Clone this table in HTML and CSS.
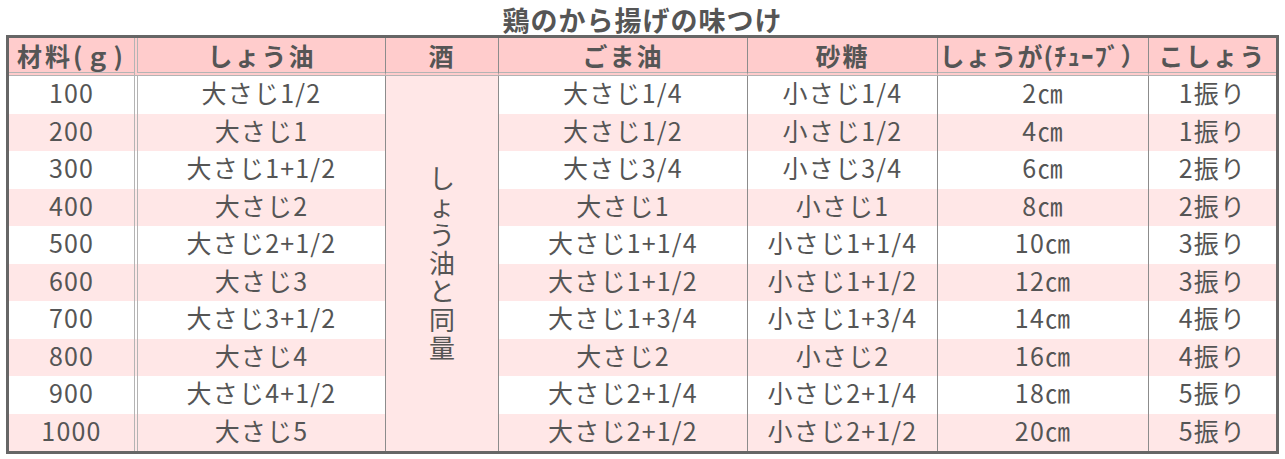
FILE: index.html
```html
<!DOCTYPE html>
<html lang="ja">
<head>
<meta charset="utf-8">
<title>鶏のから揚げの味つけ</title>
<link rel="stylesheet" href="styles.css">
</head>
<body>
<div class="page">
  <h1 class="title">鶏のから揚げの味つけ</h1>
  <table class="recipe">
    <thead>
      <tr>
        <th class="c1 tight">材料(ｇ)</th>
        <th class="c2">しょう油</th>
        <th class="c3">酒</th>
        <th class="c4">ごま油</th>
        <th class="c5">砂糖</th>
        <th class="c6 narrow">しょうが(ﾁｭｰﾌﾞ）</th>
        <th class="c7">こしょう</th>
      </tr>
    </thead>
    <tbody>
      <tr class="odd">
        <td class="c1">100</td><td class="c2">大さじ1/2</td>
        <td class="c3 merged" rowspan="10"><span class="vtext">しょう油と同量</span></td>
        <td class="c4">大さじ1/4</td><td class="c5">小さじ1/4</td><td class="c6">2㎝</td><td class="c7">1振り</td>
      </tr>
      <tr class="even">
        <td class="c1">200</td><td class="c2">大さじ1</td><td class="c4">大さじ1/2</td><td class="c5">小さじ1/2</td><td class="c6">4㎝</td><td class="c7">1振り</td>
      </tr>
      <tr class="odd">
        <td class="c1">300</td><td class="c2">大さじ1+1/2</td><td class="c4">大さじ3/4</td><td class="c5">小さじ3/4</td><td class="c6">6㎝</td><td class="c7">2振り</td>
      </tr>
      <tr class="even">
        <td class="c1">400</td><td class="c2">大さじ2</td><td class="c4">大さじ1</td><td class="c5">小さじ1</td><td class="c6">8㎝</td><td class="c7">2振り</td>
      </tr>
      <tr class="odd">
        <td class="c1">500</td><td class="c2">大さじ2+1/2</td><td class="c4">大さじ1+1/4</td><td class="c5">小さじ1+1/4</td><td class="c6">10㎝</td><td class="c7">3振り</td>
      </tr>
      <tr class="even">
        <td class="c1">600</td><td class="c2">大さじ3</td><td class="c4">大さじ1+1/2</td><td class="c5">小さじ1+1/2</td><td class="c6">12㎝</td><td class="c7">3振り</td>
      </tr>
      <tr class="odd">
        <td class="c1">700</td><td class="c2">大さじ3+1/2</td><td class="c4">大さじ1+3/4</td><td class="c5">小さじ1+3/4</td><td class="c6">14㎝</td><td class="c7">4振り</td>
      </tr>
      <tr class="even">
        <td class="c1">800</td><td class="c2">大さじ4</td><td class="c4">大さじ2</td><td class="c5">小さじ2</td><td class="c6">16㎝</td><td class="c7">4振り</td>
      </tr>
      <tr class="odd">
        <td class="c1">900</td><td class="c2">大さじ4+1/2</td><td class="c4">大さじ2+1/4</td><td class="c5">小さじ2+1/4</td><td class="c6">18㎝</td><td class="c7">5振り</td>
      </tr>
      <tr class="even">
        <td class="c1">1000</td><td class="c2">大さじ5</td><td class="c4">大さじ2+1/2</td><td class="c5">小さじ2+1/2</td><td class="c6">20㎝</td><td class="c7">5振り</td>
      </tr>
    </tbody>
  </table>
</div>
</body>
</html>
```
FILE: styles.css
```css
html, body {
  margin: 0;
  padding: 0;
  background: #ffffff;
}

body {
  font-family: "Noto Sans CJK JP", "Noto Sans", sans-serif;
  color: #555555;
}

.page {
  padding: 5px 0 0 6px;
}

.title {
  margin: 0;
  width: 1273px;
  height: 30px;
  font-size: 27px;
  line-height: 30px;
  font-weight: bold;
  letter-spacing: 1px;
  text-align: center;
  color: #555555;
}

.recipe {
  width: 1273px;
  table-layout: fixed;
  border-collapse: separate;
  border-spacing: 0;
  border: 3px solid #666666;
}

.recipe th,
.recipe td {
  box-sizing: border-box;
  padding: 0;
  text-align: center;
  vertical-align: middle;
  white-space: nowrap;
  border-left: 1px solid #8c8c8c;
}

.recipe th {
  height: 34px;
  background: #ffcccc;
  font-size: 25px;
  line-height: 34px;
  font-weight: bold;
  letter-spacing: 2px;
  border-bottom: 4px double #b4b4b4;
}

.recipe th.tight {
  letter-spacing: 3px;
}

.recipe th.narrow {
  letter-spacing: 1px;
}

.recipe td {
  font-size: 25px;
  line-height: 33px;
  font-weight: normal;
  letter-spacing: 1.2px;
  padding-bottom: 4px;
}

.recipe tbody tr {
  height: 37.5px;
}

.recipe tr.odd td {
  background: #ffffff;
}

.recipe tr.even td {
  background: #ffe7e7;
}

.recipe .c1 { width: 125px; border-left: none; }
.recipe .c2 { width: 251px; border-left: 4px double #b4b4b4; }
.recipe .c3 { width: 113px; }
.recipe .c4 { width: 249px; }
.recipe .c5 { width: 190px; }
.recipe .c6 { width: 211px; }
.recipe .c7 { width: 128px; }

.recipe tr td.merged {
  background: #ffe7e7;
  padding-bottom: 0;
}

.vtext {
  display: inline-block;
  width: 1em;
  white-space: normal;
  word-break: break-all;
  font-size: 26px;
  line-height: 28.3px;
  letter-spacing: 0;
}
```
